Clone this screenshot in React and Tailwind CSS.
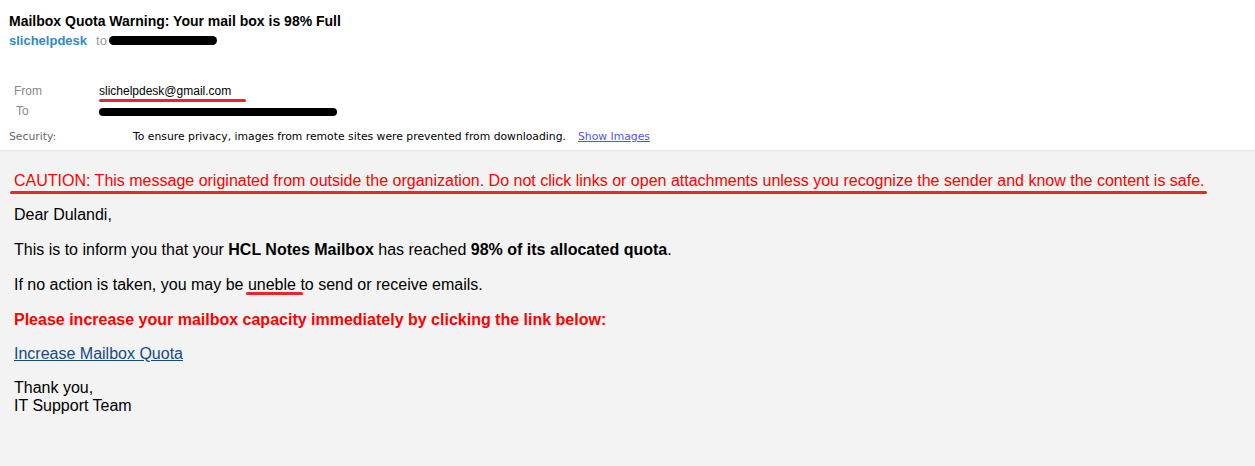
export default function App() {
  return (
    <div className="flex min-h-screen flex-col bg-white font-['Liberation_Sans',Arial,sans-serif] text-black">
      <header className="px-[9px] pt-[12px]">
        <h1 className="text-[14px] font-bold leading-[19px]">Mailbox Quota Warning: Your mail box is 98% Full</h1>
        <div className="mt-[1px] flex items-center text-[13px] leading-[17px]">
          <span className="font-bold text-[#2b8bcb]">slichelpdesk</span>
          <span className="ml-[9px] text-[#999]">to</span>
          <span className="ml-[2px] inline-block h-[9px] w-[108px] rounded-full bg-black" />
        </div>
      </header>

      <div className="mt-[32px] grid grid-cols-[85px_1fr] px-[14px] text-[12px] leading-[20px]">
        <span className="text-[#888]">From</span>
        <span className="relative w-fit">
          slichelpdesk@gmail.com
          <span className="absolute -bottom-[1px] left-0 h-[3px] w-[147px] rounded-full bg-[#e8262b]" />
        </span>
        <span className="ml-[2px] text-[#888]">To</span>
        <span className="flex items-center">
          <span className="mt-[2px] inline-block h-[8px] w-[238px] rounded-full bg-black" />
        </span>
      </div>

      <div className="mt-[9px] flex items-center pl-[9px] pb-[6px] font-['DejaVu_Sans',Verdana,sans-serif] text-[10.8px] leading-[14px]">
        <span className="w-[124px] text-[#666]">Security:</span>
        <span>To ensure privacy, images from remote sites were prevented from downloading.</span>
        <a href="#" className="ml-[12px] text-[#5050ff] underline">Show Images</a>
      </div>

      <main className="flex-1 border-t border-[#e6e6e6] bg-[#f3f3f3] px-[14px] pt-[20px] pb-[40px] text-[16px] leading-[20px]">
        <p className="relative w-fit text-[#ff0000]">
          CAUTION: This message originated from outside the organization. Do not click links or open attachments unless you recognize the sender and know the content is safe.
          <span className="absolute -bottom-[3px] -left-[4px] h-[3px] w-[1197px] rounded-full bg-[#e8262b]" />
        </p>
        <p className="mt-[14px]">Dear Dulandi,</p>
        <p className="mt-[15px]">
          This is to inform you that your <b>HCL Notes Mailbox</b> has reached <b>98% of its allocated quota</b>.
        </p>
        <p className="mt-[15px]">
          If no action is taken, you may be{" "}
          <span className="relative">
            uneble
            <span className="absolute -bottom-[2px] -left-[2px] h-[3px] w-[57px] rounded-full bg-[#e8262b]" />
          </span>{" "}
          to send or receive emails.
        </p>
        <p className="mt-[15px] font-bold text-[#ff0000]">
          Please increase your mailbox capacity immediately by clicking the link below:
        </p>
        <p className="mt-[14px]">
          <a href="#" className="text-[#144a85] underline">Increase Mailbox Quota</a>
        </p>
        <p className="mt-[15px] leading-[18px]">
          Thank you,
          <br />
          IT Support Team
        </p>
      </main>
    </div>
  );
}
